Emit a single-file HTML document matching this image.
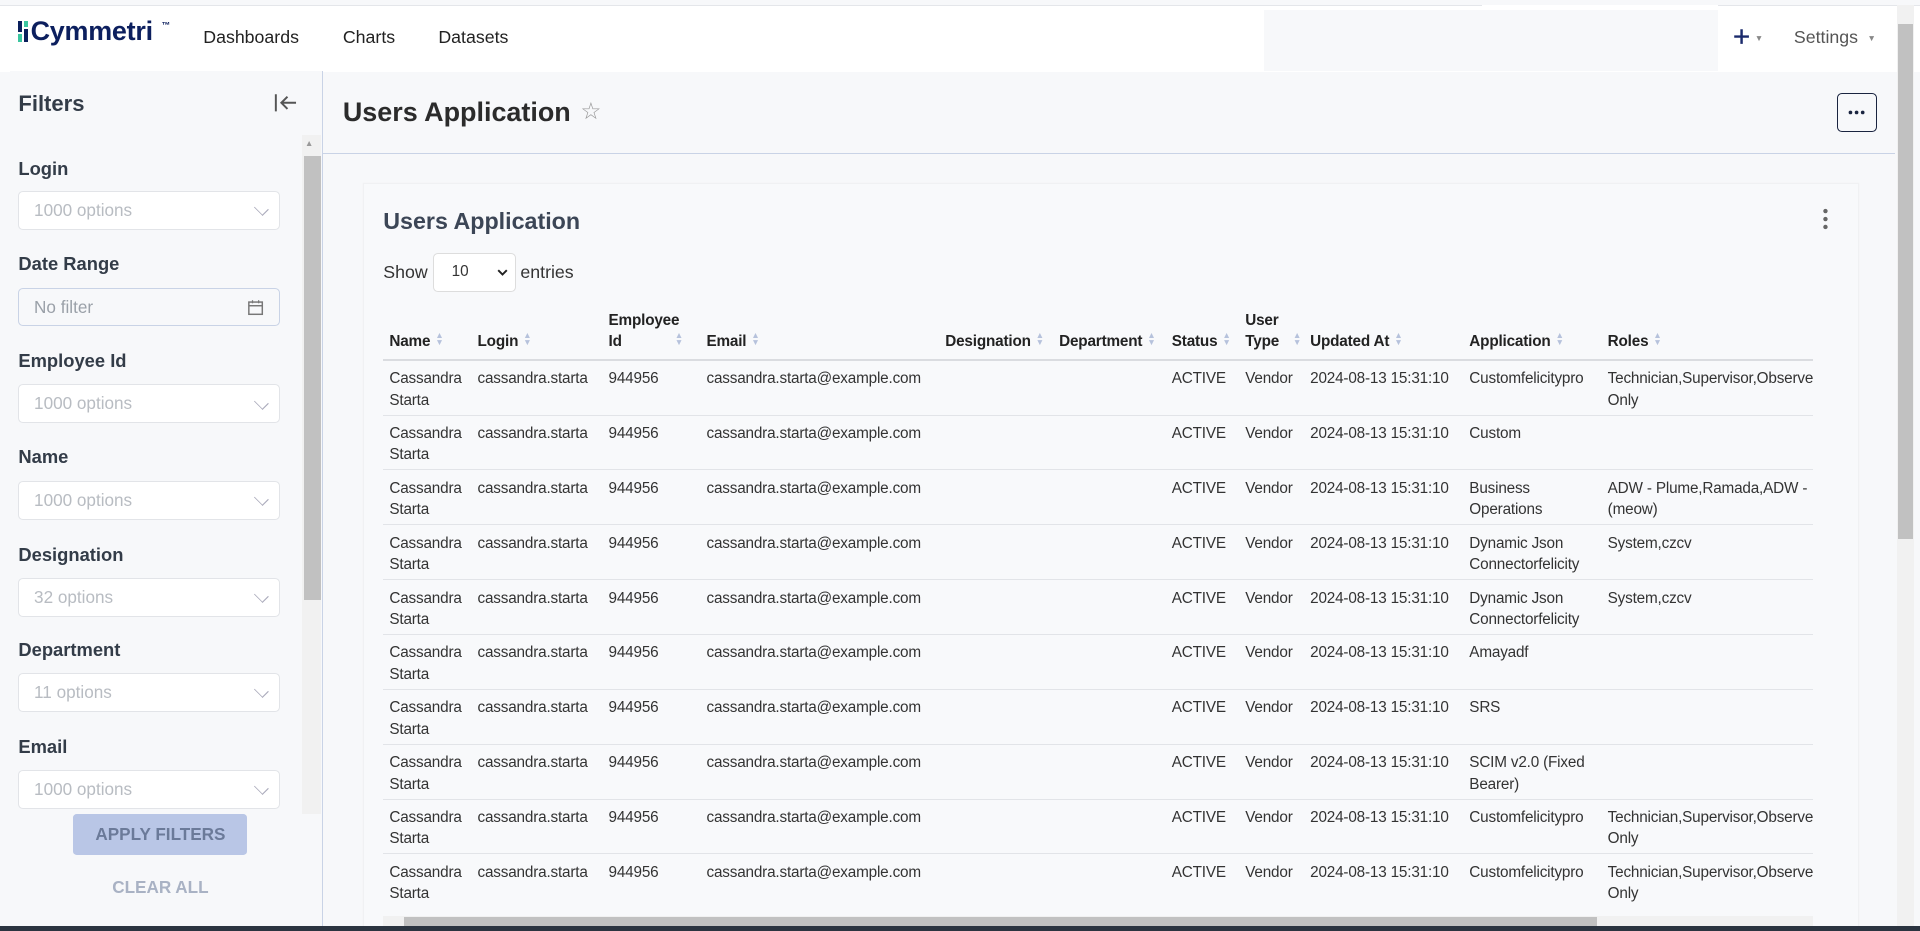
<!DOCTYPE html>
<html><head><meta charset="utf-8"><style>
html{zoom:1.22449}
body{margin:0;width:1568px;height:760px;overflow:hidden;background:#f7f8fa;font-family:"Liberation Sans",sans-serif;color:#333;position:relative}
.abs{position:absolute}
.hdr{left:0;top:4px;width:1568px;height:54px;background:#fff;border-top:1px solid #e4e6ea}
.nav{top:22px;font-size:14.5px;color:#222}
.side{left:8px;top:58px;width:255px;height:698px;background:#f7f8fa;border-right:1px solid #c9d3e6}
.lbl{left:15px;font-size:15px;font-weight:bold;color:#333c48}
.inp{left:15px;width:212px;height:30px;background:#fff;border:1px solid #e2e4e8;border-radius:4px;font-size:14px;color:#b8bcc2;line-height:30px;text-indent:12px}
.chev{position:absolute;right:10px;top:9px;width:8px;height:8px;border-right:1.3px solid #aab;border-bottom:1.3px solid #aab;transform:rotate(45deg) scale(1.1,0.8)}
table{border-collapse:collapse;font-size:12.5px;letter-spacing:-0.15px;table-layout:fixed}
th{font-weight:bold;text-align:left;vertical-align:bottom;padding:0 5px 5px;color:#222;line-height:17px;height:38px;white-space:nowrap;overflow:hidden}
td{vertical-align:top;padding:6px 5px 3px;line-height:17.5px;color:#333;height:35.4px;border-top:1px solid #e2e4e8;white-space:nowrap;overflow:hidden;box-sizing:border-box}
.ar{display:inline-block;margin-left:4px;color:#b6c2dc;font-size:7px;line-height:5px;vertical-align:1px}
</style></head><body>
<div class="abs hdr"></div>
<div class="abs" style="left:1032px;top:8px;width:371px;height:50px;background:#f7f8fa"></div>
<div class="abs" style="left:1210px;top:4px;width:193px;height:4px;background:#fff"></div>
<div class="abs" style="left:15px;top:17px;width:3px;height:9px;background:#0a1f5c"></div>
<div class="abs" style="left:15px;top:28px;width:3px;height:6px;background:#3cc6a0"></div>
<div class="abs" style="left:20px;top:17px;width:3px;height:5px;background:#3cc6a0"></div>
<div class="abs" style="left:20px;top:24px;width:3px;height:10px;background:#0a1f5c"></div>
<div class="abs" style="left:25px;top:13px;font-size:22px;font-weight:bold;color:#0c1f5e;letter-spacing:-0.2px">Cymmetri</div>
<div class="abs" style="left:132px;top:16px;font-size:7px;font-weight:bold;color:#0c1f5e">™</div>
<div class="abs nav" style="left:166px">Dashboards</div>
<div class="abs nav" style="left:280px">Charts</div>
<div class="abs nav" style="left:358px">Datasets</div>
<svg class="abs" style="left:1415px;top:23px" width="14" height="14" viewBox="0 0 14 14"><path d="M7 1v12M1 7h12" stroke="#1a2a6c" stroke-width="2"/></svg>
<div class="abs" style="left:1433px;top:27px;font-size:7px;color:#888">▼</div>
<div class="abs nav" style="left:1465px;color:#555">Settings</div>
<div class="abs" style="left:1525px;top:27px;font-size:7px;color:#888">▼</div>
<div class="abs side"></div>
<div class="abs" style="left:15px;top:74px;font-size:18px;font-weight:bold;color:#333c48">Filters</div>
<svg class="abs" style="left:224px;top:76px" width="20" height="16" viewBox="0 0 20 16"><path d="M1.5 1v14M18 8H6M11 3L6 8l5 5" fill="none" stroke="#555" stroke-width="1.6"/></svg>
<div class="abs" style="left:247px;top:110px;width:15px;height:555px;background:#f1f1f1"></div>
<div class="abs" style="left:249px;top:113px;font-size:7px;color:#999">▲</div>
<div class="abs" style="left:248px;top:127px;width:14px;height:363px;background:#c1c1c1"></div>
<div class="abs lbl" style="top:129px">Login</div>
<div class="abs inp" style="top:156px">1000 options<i class="chev"></i></div>
<div class="abs lbl" style="top:207px">Date Range</div>
<div class="abs inp" style="top:235px;background:#f7f8fa;border-color:#c9d3e6;color:#9aa0a8">No filter
<svg style="position:absolute;right:12px;top:8px" width="14" height="14" viewBox="0 0 14 14"><rect x="1.5" y="2.5" width="11" height="10" fill="none" stroke="#777" stroke-width="1.2"/><line x1="1.5" y1="5.5" x2="12.5" y2="5.5" stroke="#777" stroke-width="1.2"/><line x1="4.5" y1="1" x2="4.5" y2="3.5" stroke="#777"/><line x1="9.5" y1="1" x2="9.5" y2="3.5" stroke="#777"/></svg></div>
<div class="abs lbl" style="top:286px">Employee Id</div>
<div class="abs inp" style="top:314px">1000 options<i class="chev"></i></div>
<div class="abs lbl" style="top:364px">Name</div>
<div class="abs inp" style="top:393px">1000 options<i class="chev"></i></div>
<div class="abs lbl" style="top:444px">Designation</div>
<div class="abs inp" style="top:472px">32 options<i class="chev"></i></div>
<div class="abs lbl" style="top:522px">Department</div>
<div class="abs inp" style="top:550px">11 options<i class="chev"></i></div>
<div class="abs lbl" style="top:601px">Email</div>
<div class="abs inp" style="top:629px">1000 options<i class="chev"></i></div>
<div class="abs" style="left:60px;top:665px;width:142px;height:33px;background:#b9c6e6;border-radius:3px;text-align:center;line-height:33px;font-size:14px;font-weight:bold;color:#6b7a99">APPLY FILTERS</div>
<div class="abs" style="left:60px;top:716px;width:142px;text-align:center;font-size:14px;font-weight:bold;color:#a9b2c4">CLEAR ALL</div>
<div class="abs" style="left:280px;top:79px;font-size:22px;font-weight:bold;color:#2b2b2b">Users Application</div>
<div class="abs" style="left:474px;top:80px;font-size:19px;color:#999">☆</div>
<div class="abs" style="left:1500px;top:76px;width:31px;height:30px;border:1px solid #1a2440;border-radius:4px"></div>
<svg class="abs" style="left:1509px;top:90px" width="14" height="4"><circle cx="2" cy="2" r="1.5" fill="#1a2440"/><circle cx="7" cy="2" r="1.5" fill="#1a2440"/><circle cx="12" cy="2" r="1.5" fill="#1a2440"/></svg>
<div class="abs" style="left:264px;top:125px;width:1284px;height:1px;background:#c9d3e6"></div>
<div class="abs" style="left:1549px;top:4px;width:14px;height:752px;background:#f1f1f1"></div>
<div class="abs" style="left:1550px;top:20px;width:12px;height:420px;background:#c1c1c1"></div>
<div class="abs" style="left:297px;top:150px;width:1220px;height:606px;background:#f8f9fb;box-shadow:0 0 0 1px #f0f1f3"></div>
<div class="abs" style="left:313px;top:170px;font-size:19px;font-weight:bold;color:#3c4656">Users Application</div>
<svg class="abs" style="left:1489px;top:170px" width="4" height="18"><circle cx="2" cy="2.5" r="1.8" fill="#666"/><circle cx="2" cy="9" r="1.8" fill="#666"/><circle cx="2" cy="15.5" r="1.8" fill="#666"/></svg>
<div class="abs" style="left:313px;top:214px;font-size:14.5px">Show</div>
<div class="abs" style="left:354px;top:207px;width:66px;height:30px;background:#fff;border:1px solid #ddd;border-radius:4px;font-size:12.5px;line-height:30px;text-indent:14px">10
<svg style="position:absolute;right:6px;top:12px" width="9" height="6"><path d="M1 1l3.5 3.5L8 1" fill="none" stroke="#222" stroke-width="1.6"/></svg></div>
<div class="abs" style="left:425px;top:214px;font-size:14.5px">entries</div>
<div class="abs" style="left:313px;top:250px;width:1168px;height:498px;overflow:hidden">
<table style="width:1220px">
<colgroup><col style="width:72px"><col style="width:107px"><col style="width:80px"><col style="width:195px"><col style="width:93px"><col style="width:92px"><col style="width:60px"><col style="width:53px"><col style="width:130px"><col style="width:113px"><col></colgroup>
<thead><tr style="border-bottom:2px solid #dadce0">
<th>Name<span class="ar">▲<br>▼</span></th>
<th>Login<span class="ar">▲<br>▼</span></th>
<th>Employee<br>Id <span class="ar" style="margin-left:40px">▲<br>▼</span></th>
<th>Email<span class="ar">▲<br>▼</span></th>
<th>Designation<span class="ar">▲<br>▼</span></th>
<th>Department<span class="ar">▲<br>▼</span></th>
<th>Status<span class="ar">▲<br>▼</span></th>
<th>User<br>Type <span class="ar" style="margin-left:8px">▲<br>▼</span></th>
<th>Updated At<span class="ar">▲<br>▼</span></th>
<th>Application<span class="ar">▲<br>▼</span></th>
<th>Roles<span class="ar">▲<br>▼</span></th>
</tr></thead>
<tbody>
<tr><td>Cassandra<br>Starta</td><td>cassandra.starta</td><td>944956</td><td>cassandra.starta@example.com</td><td></td><td></td><td>ACTIVE</td><td>Vendor</td><td>2024-08-13 15:31:10</td><td>Customfelicitypro</td><td>Technician,Supervisor,Observer<br>Only</td></tr>
<tr><td>Cassandra<br>Starta</td><td>cassandra.starta</td><td>944956</td><td>cassandra.starta@example.com</td><td></td><td></td><td>ACTIVE</td><td>Vendor</td><td>2024-08-13 15:31:10</td><td>Custom</td><td></td></tr>
<tr><td>Cassandra<br>Starta</td><td>cassandra.starta</td><td>944956</td><td>cassandra.starta@example.com</td><td></td><td></td><td>ACTIVE</td><td>Vendor</td><td>2024-08-13 15:31:10</td><td>Business<br>Operations</td><td>ADW - Plume,Ramada,ADW -<br>(meow)</td></tr>
<tr><td>Cassandra<br>Starta</td><td>cassandra.starta</td><td>944956</td><td>cassandra.starta@example.com</td><td></td><td></td><td>ACTIVE</td><td>Vendor</td><td>2024-08-13 15:31:10</td><td>Dynamic Json<br>Connectorfelicity</td><td>System,czcv</td></tr>
<tr><td>Cassandra<br>Starta</td><td>cassandra.starta</td><td>944956</td><td>cassandra.starta@example.com</td><td></td><td></td><td>ACTIVE</td><td>Vendor</td><td>2024-08-13 15:31:10</td><td>Dynamic Json<br>Connectorfelicity</td><td>System,czcv</td></tr>
<tr><td>Cassandra<br>Starta</td><td>cassandra.starta</td><td>944956</td><td>cassandra.starta@example.com</td><td></td><td></td><td>ACTIVE</td><td>Vendor</td><td>2024-08-13 15:31:10</td><td>Amayadf</td><td></td></tr>
<tr><td>Cassandra<br>Starta</td><td>cassandra.starta</td><td>944956</td><td>cassandra.starta@example.com</td><td></td><td></td><td>ACTIVE</td><td>Vendor</td><td>2024-08-13 15:31:10</td><td>SRS</td><td></td></tr>
<tr><td>Cassandra<br>Starta</td><td>cassandra.starta</td><td>944956</td><td>cassandra.starta@example.com</td><td></td><td></td><td>ACTIVE</td><td>Vendor</td><td>2024-08-13 15:31:10</td><td>SCIM v2.0 (Fixed<br>Bearer)</td><td></td></tr>
<tr><td>Cassandra<br>Starta</td><td>cassandra.starta</td><td>944956</td><td>cassandra.starta@example.com</td><td></td><td></td><td>ACTIVE</td><td>Vendor</td><td>2024-08-13 15:31:10</td><td>Customfelicitypro</td><td>Technician,Supervisor,Observer<br>Only</td></tr>
<tr><td>Cassandra<br>Starta</td><td>cassandra.starta</td><td>944956</td><td>cassandra.starta@example.com</td><td></td><td></td><td>ACTIVE</td><td>Vendor</td><td>2024-08-13 15:31:10</td><td>Customfelicitypro</td><td>Technician,Supervisor,Observer<br>Only</td></tr>
</tbody></table></div>
<div class="abs" style="left:313px;top:748px;width:1168px;height:9px;background:#f1f1f1"></div>
<div class="abs" style="left:330px;top:749px;width:974px;height:8px;background:#c1c1c1"></div>
<div class="abs" style="left:0;top:756px;width:1568px;height:4px;background:#2b3440"></div>
</body></html>
